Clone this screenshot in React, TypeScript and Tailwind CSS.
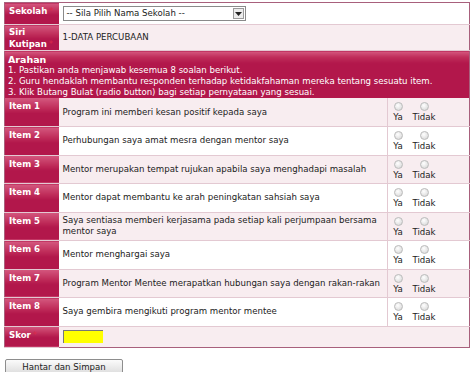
import React from 'react'

const ITEMS = [
  'Program ini memberi kesan positif kepada saya',
  'Perhubungan saya amat mesra dengan mentor saya',
  'Mentor merupakan tempat rujukan apabila saya menghadapi masalah',
  'Mentor dapat membantu ke arah peningkatan sahsiah saya',
  'Saya sentiasa memberi kerjasama pada setiap kali perjumpaan bersama mentor saya',
  'Mentor menghargai saya',
  'Program Mentor Mentee merapatkan hubungan saya dengan rakan-rakan',
  'Saya gembira mengikuti program mentor mentee',
]

const LABEL =
  'align-top border-b border-[#e3c9d2] bg-[linear-gradient(180deg,#d4587f_0%,#c02e5b_35%,#b2174b_55%,#b2174b_100%)] px-[4px] pt-[3px] font-bold text-white'

function Star() {
  return <span className="ml-[2px] font-normal text-[#d9294a]">*</span>
}

function Radio() {
  return (
    <span className="block h-[9px] w-[9px] rounded-full border border-[#bdbdbd] bg-[radial-gradient(circle_at_40%_35%,#ffffff_0%,#e4e4e4_60%,#cfcfcf_100%)]" />
  )
}

export default function App() {
  return (
    <div className="bg-white pl-[4px] pt-[2px] font-['DejaVu_Sans',Verdana,sans-serif] text-[8.6px] leading-[11px] text-[#222]">
      <table className="w-[465px] table-fixed border-collapse border border-[#a8607c]">
        <colgroup>
          <col className="w-[54px]" />
          <col className="w-[329px]" />
          <col className="w-[82px]" />
        </colgroup>
        <tbody>
          <tr className="h-[22px]">
            <td className={LABEL}>
              Sekolah
              <Star />
            </td>
            <td colSpan={2} className="border-b border-[#e3c9d2] bg-white px-[4px] align-middle">
              <div className="flex h-[15px] w-[183px] items-center justify-between border border-[#8a8a8a] bg-white pl-[3px]">
                <span>-- Sila Pilih Nama Sekolah --</span>
                <span className="m-[1px] flex h-[11px] w-[11px] items-center justify-center border border-[#9a9a9a] bg-[#ececec]">
                  <svg width="7" height="4" viewBox="0 0 7 4">
                    <path d="M0 0h7L3.5 4z" fill="#222" />
                  </svg>
                </span>
              </div>
            </td>
          </tr>
          <tr className="h-[26px]">
            <td className={LABEL + ' !pt-[1px] leading-[12px]'}>
              Siri
              <br />
              Kutipan
              <Star />
            </td>
            <td colSpan={2} className="border-b border-[#e3c9d2] bg-[#f8edf0] px-[4px] align-middle">
              1-DATA PERCUBAAN
            </td>
          </tr>
          <tr className="h-[47px]">
            <td
              colSpan={3}
              className="align-top whitespace-nowrap bg-[linear-gradient(180deg,#d4587f_0%,#c02e5b_12%,#b2174b_25%,#b2174b_100%)] px-[3px] pt-[3px] text-white"
            >
              <div className="text-[9.5px] font-bold leading-[11px]">Arahan</div>
              <div>1. Pastikan anda menjawab kesemua 8 soalan berikut.</div>
              <div>2. Guru hendaklah membantu responden terhadap ketidakfahaman mereka tentang sesuatu item.</div>
              <div>3. Klik Butang Bulat (radio button) bagi setiap pernyataan yang sesuai.</div>
            </td>
          </tr>
          {ITEMS.map((text, i) => {
            const bg = i % 2 === 0 ? 'bg-[#f8edf0]' : 'bg-white'
            return (
              <tr key={i} className="h-[28.5px]">
                <td className={LABEL}>Item {i + 1}</td>
                <td className={`border-b border-[#e3c9d2] ${bg} px-[4px] align-middle`}>{text}</td>
                <td className={`border-b border-l border-[#e3c9d2] ${bg} pl-[4px] align-top`}>
                  <div className="flex gap-[9px] pt-[4px]">
                    <div className="flex w-[12px] flex-col items-center">
                      <Radio />
                      <span className="mt-[1px]">Ya</span>
                    </div>
                    <div className="flex w-[22px] flex-col items-center">
                      <Radio />
                      <span className="mt-[1px]">Tidak</span>
                    </div>
                  </div>
                </td>
              </tr>
            )
          })}
          <tr className="h-[21px]">
            <td className={LABEL}>
              Skor
              <Star />
            </td>
            <td colSpan={2} className="bg-[#f8edf0] px-[4px] align-middle">
              <div className="h-[13px] w-[40px] border-t border-l border-[#777] bg-[#ffff00]" />
            </td>
          </tr>
        </tbody>
      </table>
      <button
        type="button"
        className="mt-[11px] ml-[1px] h-[16px] w-[118px] rounded-[2px] border border-[#8d8d8d] bg-[linear-gradient(180deg,#fbfbfb,#dcdcdc)] text-[8.6px] leading-[12px] text-[#222]"
      >
        Hantar dan Simpan
      </button>
    </div>
  )
}
